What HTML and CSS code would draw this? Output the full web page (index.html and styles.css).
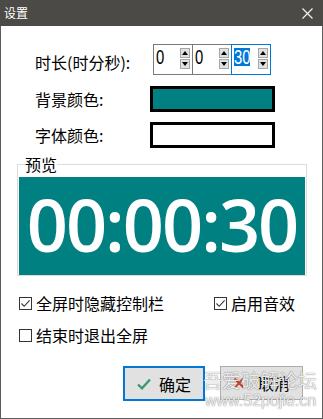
FILE: index.html
```html
<!DOCTYPE html>
<html lang="zh-CN">
<head>
<meta charset="utf-8">
<title>设置</title>
<link rel="stylesheet" href="styles.css">
</head>
<body>
<div class="window">
  <div class="titlebar">
    <span class="title">设置</span>
    <svg class="close" width="11" height="11" viewBox="0 0 11 11"><path d="M0.5 0.5L10.5 10.5M10.5 0.5L0.5 10.5" stroke="#f2f2f2" stroke-width="1.2" fill="none"/></svg>
  </div>
  <div class="content">
    <div class="form">
      <div class="row row-time">
        <span class="label">时长(时分秒):</span>
        <div class="spins">
          <div class="spin"><span class="val"><span class="num">0</span></span><div class="arrows"><span class="arrow"><svg width="6" height="4" viewBox="0 0 6 4"><path d="M0 4L3 0L6 4Z" fill="#000"/></svg></span><span class="arrow"><svg width="6" height="4" viewBox="0 0 6 4"><path d="M0 0L3 4L6 0Z" fill="#000"/></svg></span></div></div>
          <div class="spin"><span class="val"><span class="num">0</span></span><div class="arrows"><span class="arrow"><svg width="6" height="4" viewBox="0 0 6 4"><path d="M0 4L3 0L6 4Z" fill="#000"/></svg></span><span class="arrow"><svg width="6" height="4" viewBox="0 0 6 4"><path d="M0 0L3 4L6 0Z" fill="#000"/></svg></span></div></div>
          <div class="spin focus"><span class="val sel"><span class="num">30</span></span><div class="arrows"><span class="arrow"><svg width="6" height="4" viewBox="0 0 6 4"><path d="M0 4L3 0L6 4Z" fill="#000"/></svg></span><span class="arrow"><svg width="6" height="4" viewBox="0 0 6 4"><path d="M0 0L3 4L6 0Z" fill="#000"/></svg></span></div></div>
        </div>
      </div>
      <div class="row row-color">
        <span class="label">背景颜色:</span>
        <div class="swatch teal"></div>
      </div>
      <div class="row row-color row-font">
        <span class="label">字体颜色:</span>
        <div class="swatch white"></div>
      </div>
    </div>
    <fieldset class="preview">
      <legend>预览</legend>
      <div class="screen">00:00:30</div>
    </fieldset>
    <div class="options">
      <div class="opt-row">
        <label class="check first"><span class="box"><svg width="11" height="11" viewBox="0 0 11 11"><path d="M1.5 5.5L4.2 8.3L9.6 2.4" stroke="#333" stroke-width="1.1" fill="none"/></svg></span>全屏时隐藏控制栏</label>
        <label class="check"><span class="box"><svg width="11" height="11" viewBox="0 0 11 11"><path d="M1.5 5.5L4.2 8.3L9.6 2.4" stroke="#333" stroke-width="1.1" fill="none"/></svg></span>启用音效</label>
      </div>
      <div class="opt-row">
        <label class="check first"><span class="box"></span>结束时退出全屏</label>
      </div>
    </div>
    <div class="buttons">
      <div class="btn ok"><svg width="14" height="12" viewBox="0 0 14 12"><path d="M1 6.5L5 10.3L13 1.5" stroke="#3a9a6e" stroke-width="2.4" fill="none"/></svg><span>确定</span></div>
      <div class="btn cancel"><svg width="12" height="12" viewBox="0 0 12 12"><path d="M1.5 1.5L10.5 10.5M10.5 1.5L1.5 10.5" stroke="#c9452e" stroke-width="2.4" fill="none"/></svg><span>取消</span></div>
    </div>
  </div>
  <div class="watermark">
    <div class="wm-cn">吾爱破解论坛</div>
    <div class="wm-en">www.52pojie.cn</div>
  </div>
</div>
</body>
</html>
```
FILE: styles.css
```css
* { box-sizing: border-box; }
body {
  margin: 0;
  background: #fff;
  font-family: "Noto Sans CJK SC", "Noto Sans", sans-serif;
  color: #000;
}
.window {
  position: relative;
  width: 323px;
  height: 419px;
  overflow: hidden;
  background: #fff;
}
.titlebar {
  height: 26px;
  background: #4b4a47;
  color: #fff;
  display: flex;
  align-items: center;
  justify-content: space-between;
  padding: 0 10px 0 4px;
  font-size: 12px;
  line-height: 16px;
}
.close { display: block; }
.content {
  height: 393px;
  border: 1px solid #5c5c5c;
  border-top: none;
  padding-top: 18px;
}
.form { margin-left: 34px; }
.row { display: flex; align-items: center; }
.label { width: 115px; font-size: 16px; line-height: 20px; }
.row-time { height: 31px; }
.row-time .label { padding-top: 5px; }
.row-color { margin-top: 11px; }
.row-font { margin-top: 10px; }
.spins { display: flex; margin-left: 3px; }
.spin {
  width: 40px;
  height: 31px;
  border: 1px solid #7a7a7a;
  background: #fff;
  display: flex;
  justify-content: space-between;
  align-items: flex-start;
  padding: 0 2px 0 2px;
}
.spin + .spin { margin-left: -1px; }
.spin.focus { border-color: #0078d7; position: relative; z-index: 1; }
.val {
  display: block;
  height: 18px;
  margin-top: 3px;
  font-family: "Liberation Sans", sans-serif;
  font-size: 20px;
  line-height: 18px;
  color: #000;
}
.num { display: inline-block; transform: scaleX(0.74); transform-origin: 0 0; }
.sel { width: 16px; background: #0078d7; color: #fff; margin-left: 0; }
.arrows {
  display: flex;
  flex-direction: column;
  gap: 1px;
  margin-top: 3px;
}
.arrow {
  width: 10px;
  height: 10px;
  background: #e1e1e1;
  border: 1px solid #a6a6a6;
  display: flex;
  align-items: center;
  justify-content: center;
}
.arrow svg { display: block; }
.swatch {
  width: 125px;
  height: 26px;
  border: 3px solid #000;
}
.teal { background: #008080; }
.white { background: #fff; }
.preview {
  margin: 4px 0 0 16px;
  width: 290px;
  min-width: 0;
  padding: 0 1px 0 1px;
  border: 1px solid #dcdcdc;
}
.preview legend {
  padding: 0;
  margin-left: 6px;
  font-size: 16px;
  line-height: 24px;
}
.screen {
  margin-top: 1px;
  height: 98px;
  background: #008080;
  color: #fff;
  display: flex;
  align-items: center;
  justify-content: center;
  font-family: "Open Sans", sans-serif;
  font-weight: 600;
  font-size: 72px;
  line-height: 1;
  letter-spacing: -2px;
  padding-bottom: 4px;
}
.options { margin: 18px 0 0 18px; }
.opt-row { display: flex; height: 18px; align-items: center; }
.opt-row + .opt-row { margin-top: 14px; }
.check {
  display: flex;
  align-items: center;
  gap: 4px;
  font-size: 16px;
  line-height: 18px;
}
.check.first { width: 195px; }
.box {
  width: 13px;
  height: 13px;
  border: 1px solid #333;
  background: #fff;
  display: flex;
  align-items: center;
  justify-content: center;
}
.box svg { display: block; }
.buttons {
  display: flex;
  justify-content: flex-end;
  align-items: flex-start;
  gap: 15px;
  margin: 22px 19px 0 0;
}
.btn {
  height: 34px;
  background: #e1e1e1;
  border: 1px solid #adadad;
  display: flex;
  align-items: center;
  justify-content: center;
  font-size: 16px;
  line-height: 20px;
}
.btn svg { display: block; }
.ok { width: 82px; height: 35px; border: 2px solid #0078d7; gap: 8px; }
.cancel { width: 83px; gap: 13px; }
.watermark {
  position: absolute;
  left: 203px;
  top: 368px;
  color: rgba(255, 255, 255, 0.9);
  text-shadow: 0 0 1px rgba(0, 0, 0, 0.45), 0 0 1px rgba(0, 0, 0, 0.3);
}
.wm-cn { font-size: 19px; line-height: 24px; }
.wm-en { font-family: "Liberation Sans", sans-serif; font-size: 16px; line-height: 18px; margin-left: 2px; }
```
